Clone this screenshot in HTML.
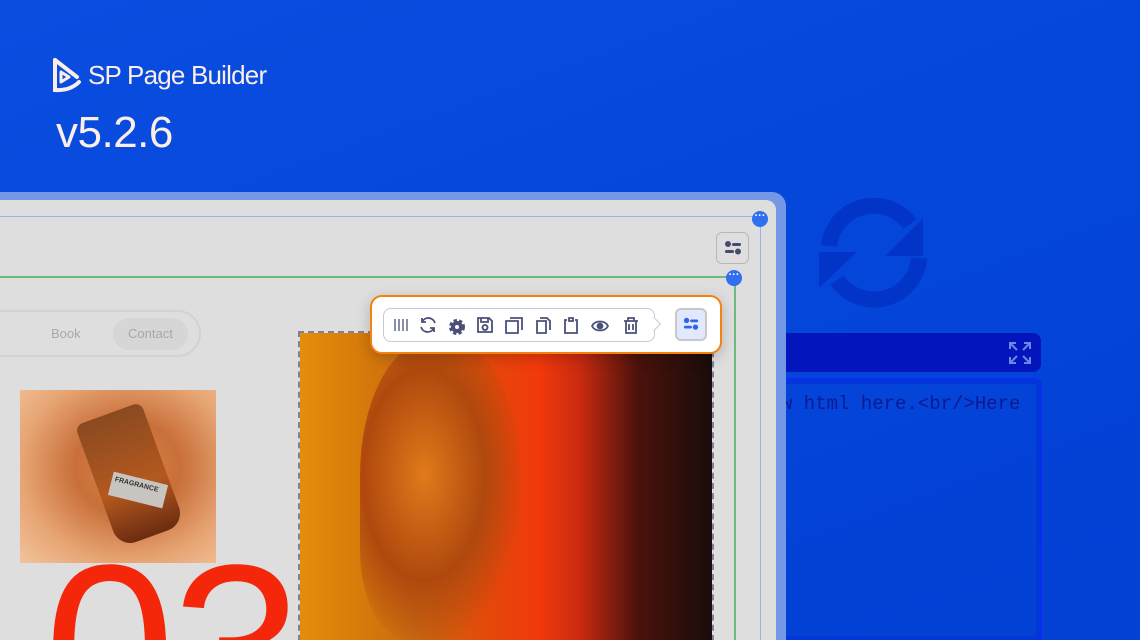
<!DOCTYPE html>
<html><head><style>
*{margin:0;padding:0;box-sizing:border-box}
html,body{width:1140px;height:640px;overflow:hidden}
body{font-family:"Liberation Sans",sans-serif}
#w{position:relative;width:1140px;height:640px;overflow:hidden;background:linear-gradient(160deg,#0a4ee0 0%,#0547dc 40%,#0340d4 100%)}
.abs{position:absolute}
</style></head><body><div id="w">
<svg class="abs" style="left:52px;top:57px" width="30" height="37" viewBox="0 0 30 37"><path d="M3 3 L3 33 Q18 34 27 25" fill="none" stroke="#fbeee6" stroke-width="4" stroke-linecap="round"/><path d="M3 3 L25 20" stroke="#fbeee6" stroke-width="4" stroke-linecap="round"/><path d="M9 15 L9 25 L17 20Z" fill="none" stroke="#fbeee6" stroke-width="3" stroke-linejoin="round"/></svg>
<div class="abs" style="left:88px;top:60px;color:#fbeee6;font-size:26px;letter-spacing:-0.8px">SP Page Builder</div>
<div class="abs" style="left:56px;top:108px;color:#fbeee6;font-size:44px;letter-spacing:-0.5px">v5.2.6</div>
<svg class="abs" style="left:815px;top:198px" width="118" height="110" viewBox="0 0 118 110"><path d="M14 48 A45 45 0 0 1 95 26" fill="none" stroke="#0234c8" stroke-width="16"/><path d="M108 20 L108 58 L70 58Z" fill="#0234c8"/><path d="M104 60 A45 45 0 0 1 22 82" fill="none" stroke="#0234c8" stroke-width="16"/><path d="M4 90 L4 54 L42 54Z" fill="#0234c8"/></svg>
<div class="abs" style="left:770px;top:333px;width:271px;height:39px;background:#0316bd;border-radius:8px"></div>
<svg class="abs" style="left:1008px;top:341px" width="24" height="24" viewBox="0 0 24 24" fill="none" stroke="#6f86e6" stroke-width="2"><path d="M2 8V2h6M2 2l7 7M22 8V2h-6M22 2l-7 7M2 16v6h6M2 22l7-7M22 16v6h-6M22 22l-7-7"/></svg>
<div class="abs" style="left:770px;top:378px;width:272px;height:262px;border:2px solid #0a2df0;border-bottom:none;border-radius:8px 8px 0 0;box-shadow:inset 0 0 0 4px #0336d8"></div>
<div class="abs" style="left:781px;top:393px;font-family:'Liberation Mono',monospace;font-size:19px;color:#0b1a92">w html here.&lt;br/&gt;Here</div>
<div class="abs" style="left:-20px;top:192px;width:806px;height:448px;background:#7598e6;border-radius:0 14px 0 0"></div>
<div class="abs" style="left:0;top:200px;width:776px;height:440px;background:#dedede;border-radius:0 10px 0 0"></div>
<div class="abs" style="left:0;top:216px;width:760px;height:1px;background:#9fb0ec"></div>
<div class="abs" style="left:760px;top:219px;width:1px;height:421px;background:#9fb0ec"></div>
<div class="abs" style="left:0;top:276px;width:734px;height:1.5px;background:#6dba7e"></div>
<div class="abs" style="left:734px;top:278px;width:1.5px;height:362px;background:#6dba7e"></div>
<div class="abs" style="left:752px;top:211px;width:16px;height:16px;border-radius:50%;background:#2f6ff0;color:#fff;font-size:11px;line-height:10px;text-align:center;font-weight:bold">···</div>
<div class="abs" style="left:726px;top:270px;width:16px;height:16px;border-radius:50%;background:#2f6ff0;color:#fff;font-size:11px;line-height:10px;text-align:center;font-weight:bold">···</div>
<div class="abs" style="left:716px;top:232px;width:33px;height:32px;border:1px solid #b8b8b8;border-radius:6px"></div>
<svg class="abs" style="left:724px;top:240px" width="18" height="16" viewBox="0 0 18 16" fill="#454a6e"><circle cx="4" cy="4" r="3"/><rect x="8" y="3" width="9" height="3" rx="1.5"/><rect x="1" y="10" width="9" height="3" rx="1.5"/><circle cx="14" cy="11.5" r="3"/></svg>
<div class="abs" style="left:-40px;top:310px;width:241px;height:47px;border:2px solid #d2d2d2;border-radius:24px"></div>
<div class="abs" style="left:-4px;top:326px;font-size:13px;color:#b0b0b0">t</div>
<div class="abs" style="left:51px;top:326px;font-size:13px;color:#a8a8a8">Book</div>
<div class="abs" style="left:113px;top:318px;width:75px;height:32px;border-radius:16px;background:#d6d6d6"></div>
<div class="abs" style="left:128px;top:326px;font-size:13px;color:#a8a8a8">Contact</div>
<div class="abs" style="left:20px;top:390px;width:196px;height:173px;overflow:hidden;background:radial-gradient(ellipse at 55% 45%,#d9834a 0%,#c9703a 35%,#e7a574 70%,#f2c39c 100%)">
<div class="abs" style="left:75px;top:20px;width:70px;height:130px;background:linear-gradient(180deg,#8a4a20,#b4581f 60%,#6a2c10);transform:rotate(-20deg);border-radius:8px 8px 18px 18px"></div>
<div class="abs" style="left:90px;top:88px;width:56px;height:24px;background:#c8c4bf;transform:rotate(14deg);font-size:7px;font-weight:bold;color:#333;line-height:10px;padding:3px">FRAGRANCE</div>
</div>
<div class="abs" style="left:44px;top:530px;font-size:236px;line-height:1;color:#f5270a;letter-spacing:-4px;height:110px;overflow:hidden">03</div>
<div class="abs" style="left:298px;top:331px;width:416px;height:320px;border:2px dashed #7b829c"></div>
<div class="abs" style="left:300px;top:333px;width:412px;height:307px;overflow:hidden;background:linear-gradient(90deg,#e58d0b 0%,#d67a0a 15%,#c86a12 28%,#e4490a 45%,#f1390c 58%,#c92a10 68%,#4a120c 82%,#1a0c0a 100%)">
<div class="abs" style="left:60px;top:7px;width:160px;height:300px;border-radius:45% 45% 30% 30%;background:radial-gradient(ellipse at 40% 45%,#e07a1a 0%,#b0480e 45%,rgba(120,40,10,0) 75%)"></div>
</div>
<div class="abs" style="left:370px;top:295px;width:352px;height:59px;background:#fff;border:2px solid #f4820f;border-radius:12px;box-shadow:0 4px 14px rgba(0,0,0,.2)"></div>
<div class="abs" style="left:383px;top:308px;width:272px;height:34px;border:1.5px solid #c6c9d8;border-radius:8px"></div>
<div class="abs" style="left:649px;top:319px;width:10px;height:10px;border-right:1.5px solid #c6c9d8;border-top:1.5px solid #c6c9d8;transform:rotate(45deg);background:#fff"></div>
<div class="abs" style="left:675px;top:308px;width:32px;height:33px;border:2px solid #c8c8c8;border-radius:6px;background:#e2e8ff"></div>
<svg class="abs" style="left:683px;top:316px" width="16" height="16" viewBox="0 0 18 16" fill="#2f66e8"><circle cx="4" cy="4" r="3"/><rect x="8" y="3" width="9" height="3" rx="1.5"/><rect x="1" y="10" width="9" height="3" rx="1.5"/><circle cx="14" cy="11.5" r="3"/></svg>
<svg class="abs" style="left:392px;top:315px" width="250" height="20" viewBox="0 0 250 20" fill="none" stroke="#4a5078" stroke-width="1.8">
<path d="M3 4v12M7 4v12M11 4v12M15 4v12" stroke-width="1.3"/>
<path d="M43 8a7 7 0 0 0-13-1M29 12a7 7 0 0 0 13 1M30 3v4h4M42 17v-4h-4"/>
<circle cx="65" cy="12" r="6" fill="#4a5078" stroke-dasharray="3 2" stroke-width="4"/><circle cx="65" cy="12" r="2" fill="#fff" stroke="none"/>
<path d="M86 3h11l3 3v11H86z M89 3v4h7V3 M93 10a2.5 2.5 0 1 0 .01 0"/>
<path d="M114 6h12v12h-12z M118 3h12v12"/>
<path d="M145 6h9v12h-9z M148 3h7l3 3v9"/>
<path d="M175 5h-2v13h12V5h-2 M177 3h4v3h-4z"/>
<path d="M200 11c3-6 13-6 16 0c-3 6-13 6-16 0z"/><circle cx="208" cy="11" r="2.5" fill="#4a5078"/>
<path d="M232 6h14M236 6V3h6v3M234 6v12h10V6M237 9v6M241 9v6"/>
</svg>
</div></body></html>
